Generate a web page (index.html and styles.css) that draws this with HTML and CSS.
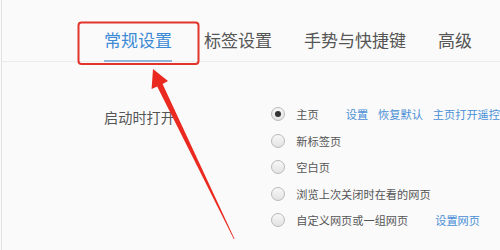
FILE: index.html
```html
<!DOCTYPE html>
<html lang="zh-CN">
<head>
<meta charset="utf-8">
<link rel="stylesheet" href="styles.css">
</head>
<body>
<div class="page">
  <nav class="tabs">
    <span class="tab active">常规设置</span>
    <span class="tab">标签设置</span>
    <span class="tab">手势与快捷键</span>
    <span class="tab">高级</span>
  </nav>
  <section class="startup">
    <div class="label">启动时打开</div>
    <div class="options">
      <div class="opt"><span class="radio checked"></span><span>主页</span><a class="link first">设置</a><a class="link">恢复默认</a><a class="link">主页打开遥控</a></div>
      <div class="opt"><span class="radio"></span><span>新标签页</span></div>
      <div class="opt"><span class="radio"></span><span>空白页</span></div>
      <div class="opt"><span class="radio"></span><span>浏览上次关闭时在看的网页</span></div>
      <div class="opt"><span class="radio"></span><span>自定义网页或一组网页</span><a class="link first">设置网页</a></div>
    </div>
  </section>
  <svg class="annot" width="500" height="250" viewBox="0 0 500 250">
    <rect x="78.5" y="22.5" width="120" height="41.5" rx="3" fill="none" stroke="#e2342b" stroke-width="2"/>
    <polygon points="153,69 168,81 162.6,83.9 234.6,239 233.8,239 157.2,86.5 151.6,89" fill="#ea2a20"/>
  </svg>
</div>
</body>
</html>
```
FILE: styles.css
```css
html, body {
  margin: 0;
  padding: 0;
}
body {
  width: 500px;
  height: 250px;
  overflow: hidden;
  background: #fafafa;
  font-family: "Noto Sans CJK SC", "Noto Sans", sans-serif;
  color: #555;
}
.page {
  position: relative;
  height: 250px;
  margin-left: 1px;
  border-left: 1px solid #e2e2e2;
}
.tabs {
  display: flex;
  gap: 32px;
  padding-left: 102px;
  height: 62px;
  border-bottom: 1px solid #ececec;
  box-sizing: border-box;
  white-space: nowrap;
}
.tab {
  font-size: 17px;
  line-height: 20px;
  padding-top: 30px;
  height: 32px;
  box-sizing: border-box;
  color: #555;
}
.tab.active {
  color: #3d8bd5;
  border-bottom: 2px solid #94b4d8;
  height: 62px;
}
.startup {
  display: flex;
  padding-left: 102px;
  padding-top: 39px;
}
.label {
  font-size: 14.2px;
  line-height: 26.5px;
  width: 170px;
  padding-top: 3px;
  white-space: nowrap;
}
.options {
  display: flex;
  flex-direction: column;
  white-space: nowrap;
}
.opt {
  display: flex;
  align-items: center;
  height: 26.5px;
  font-size: 11.2px;
  color: #555;
}
.radio {
  width: 14px;
  height: 14px;
  border-radius: 50%;
  border: 1px solid #b9b9b9;
  box-sizing: border-box;
  background: linear-gradient(#f7f7f7, #e3e3e3);
  margin-right: 11px;
  position: relative;
}
.radio.checked::after {
  content: "";
  position: absolute;
  left: 3px;
  top: 3px;
  width: 6px;
  height: 6px;
  border-radius: 50%;
  background: #333;
}
.link {
  color: #4a8fd6;
  margin-left: 10px;
}
.link.first {
  margin-left: 27px;
}
.annot {
  position: absolute;
  left: -2px;
  top: 0;
}
```
